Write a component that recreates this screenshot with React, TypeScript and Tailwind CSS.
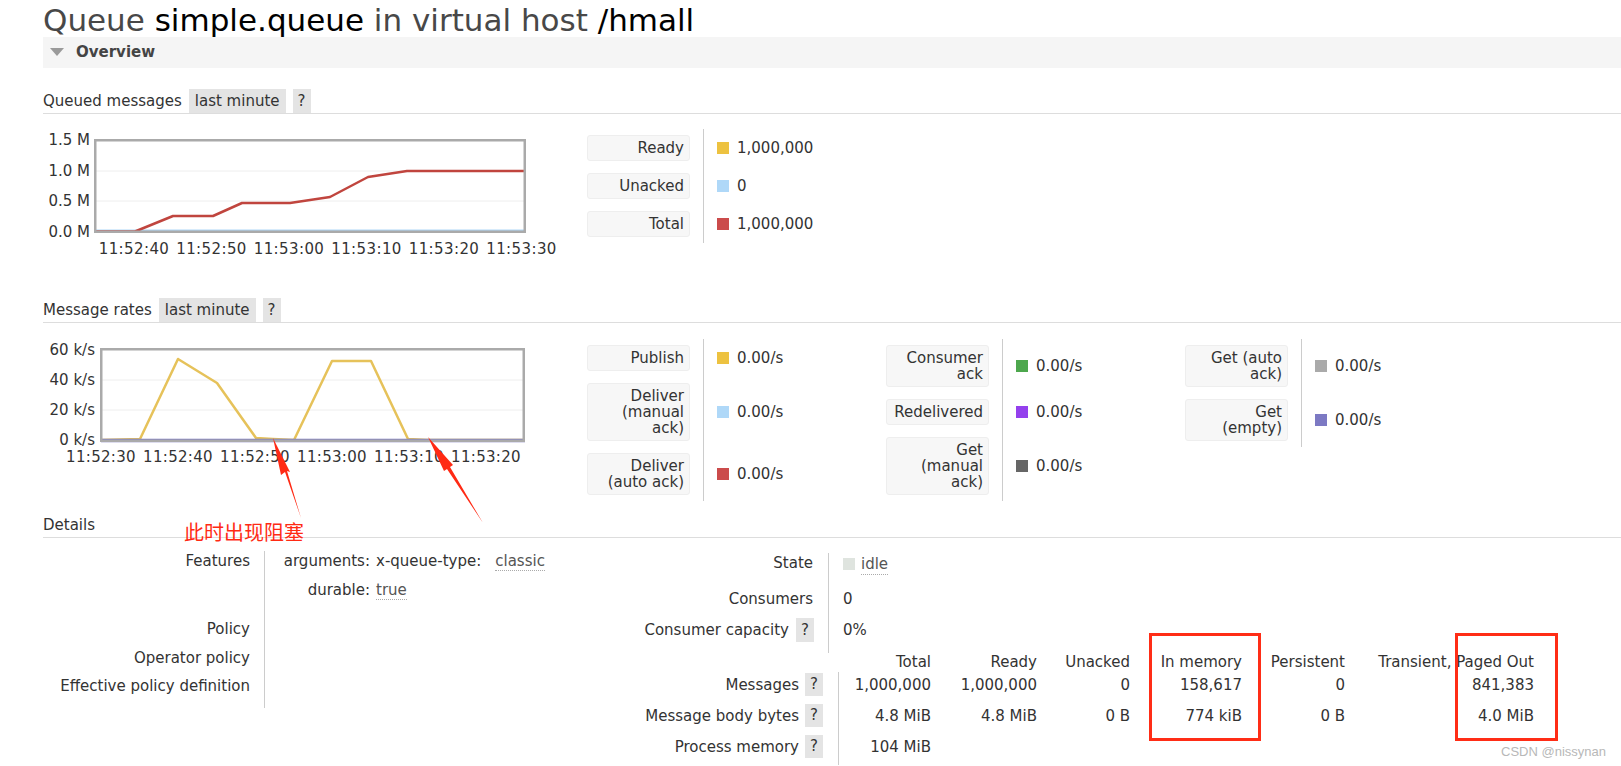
import React from 'react'

type LegendRow = { label: string[]; swatch: string; value: string }

const queuedRows: LegendRow[] = [
  { label: ['Ready'], swatch: 'bg-[#edc240]', value: '1,000,000' },
  { label: ['Unacked'], swatch: 'bg-[#afd8f8]', value: '0' },
  { label: ['Total'], swatch: 'bg-[#cb4b4b]', value: '1,000,000' },
]

const rateCols: LegendRow[][] = [
  [
    { label: ['Publish'], swatch: 'bg-[#edc240]', value: '0.00/s' },
    { label: ['Deliver', '(manual', 'ack)'], swatch: 'bg-[#afd8f8]', value: '0.00/s' },
    { label: ['Deliver', '(auto ack)'], swatch: 'bg-[#cb4b4b]', value: '0.00/s' },
  ],
  [
    { label: ['Consumer', 'ack'], swatch: 'bg-[#4da74d]', value: '0.00/s' },
    { label: ['Redelivered'], swatch: 'bg-[#9440ed]', value: '0.00/s' },
    { label: ['Get', '(manual', 'ack)'], swatch: 'bg-[#666666]', value: '0.00/s' },
  ],
  [
    { label: ['Get (auto', 'ack)'], swatch: 'bg-[#aaaaaa]', value: '0.00/s' },
    { label: ['Get', '(empty)'], swatch: 'bg-[#7c79c3]', value: '0.00/s' },
  ],
]

const SectionHeader = ({ title, range }: { title: string; range?: boolean }) => (
  <div className="flex items-center gap-[7px] h-[25px] border-b border-[#dddddd]">
    <span>{title}</span>
    {range && (
      <>
        <span className="bg-[#e4e4e4] px-[6px] h-[24px] leading-[24px]">last minute</span>
        <span className="bg-[#e4e4e4] px-[5px] h-[24px] leading-[24px]">?</span>
      </>
    )}
  </div>
)

const Legend = ({ rows }: { rows: LegendRow[] }) => (
  <div className="flex flex-col w-[299px] shrink-0">
    {rows.map((r) => (
      <div key={r.label.join(' ')} className="flex">
        <div className="py-[6px] pr-[13px]">
          <div className="w-[103px] bg-[#f7f7f7] border border-[#eeeeee] rounded-[3px] px-[5px] py-[4px] text-right leading-[16px] whitespace-nowrap">
            {r.label.map((l) => (
              <div key={l}>{l}</div>
            ))}
          </div>
        </div>
        <div className="flex items-center border-l border-[#cccccc] pl-[13px]">
          <span className={`w-[12px] h-[12px] mr-[8px] ${r.swatch}`} />
          <span>{r.value}</span>
        </div>
      </div>
    ))}
  </div>
)

const QueuedChart = () => {
  const ys: [string, number][] = [['1.5 M', 26], ['1.0 M', 57], ['0.5 M', 87], ['0.0 M', 118]]
  const xs = ['11:52:40', '11:52:50', '11:53:00', '11:53:10', '11:53:20', '11:53:30']
  return (
    <svg width={530} height={160} className="shrink-0">
      <line x1={52} x2={482} y1={57} y2={57} stroke="#eeeeee" />
      <line x1={52} x2={482} y1={87} y2={87} stroke="#eeeeee" />
      <line x1={52} x2={482} y1={117} y2={117} stroke="#afd8f8" strokeWidth={3} />
      <polyline
        points="52,117.5 92,117.5 130,102 170,102 199,89 247,89 287,83 325,63 364,57 482,57"
        fill="none"
        stroke="#c0453e"
        strokeWidth={2.5}
        strokeLinejoin="round"
      />
      <rect x={52.25} y={26.25} width={429.5} height={91.5} fill="none" stroke="#aaaaaa" strokeWidth={2.5} />
      {ys.map(([t, y]) => (
        <text key={t} x={47} y={y} textAnchor="end" dominantBaseline="central" fontSize={15} fill="#333">
          {t}
        </text>
      ))}
      {xs.map((t, i) => (
        <text
          key={t}
          x={91 + 77.5 * i}
          y={135}
          textAnchor="middle"
          dominantBaseline="central"
          fontSize={15}
          letterSpacing={0.4}
          fill="#333"
        >
          {t}
        </text>
      ))}
    </svg>
  )
}

const RatesChart = () => {
  const ys: [string, number][] = [['60 k/s', 27], ['40 k/s', 57], ['20 k/s', 87], ['0 k/s', 117]]
  const xs = ['11:52:30', '11:52:40', '11:52:50', '11:53:00', '11:53:10', '11:53:20']
  return (
    <svg width={530} height={160} className="shrink-0">
      <line x1={58} x2={482} y1={57} y2={57} stroke="#eeeeee" />
      <line x1={58} x2={482} y1={87} y2={87} stroke="#eeeeee" />
      <polyline
        points="58,117 97,116 135,36 174,60 213,115 230,116 251,117 289,38 328,38 365,116 385,117 482,117"
        fill="none"
        stroke="#e6c25a"
        strokeWidth={2.5}
        strokeLinejoin="round"
      />
      <line x1={58} x2={482} y1={117.5} y2={117.5} stroke="#7b78c0" strokeWidth={3.5} />
      <rect x={58.25} y={26.25} width={422.5} height={91.5} fill="none" stroke="#aaaaaa" strokeWidth={2.5} />
      {ys.map(([t, y]) => (
        <text key={t} x={52} y={y} textAnchor="end" dominantBaseline="central" fontSize={15} fill="#333">
          {t}
        </text>
      ))}
      {xs.map((t, i) => (
        <text
          key={t}
          x={58 + 77 * i}
          y={134}
          textAnchor="middle"
          dominantBaseline="central"
          fontSize={15}
          letterSpacing={0.3}
          fill="#333"
        >
          {t}
        </text>
      ))}
    </svg>
  )
}

const Abbr = ({ children, className = '' }: { children: React.ReactNode; className?: string }) => (
  <span className={`text-[#555] border-b border-dotted border-[#aaaaaa] ${className}`}>{children}</span>
)

const Help = () => (
  <span className="inline-block bg-[#e4e4e4] w-[18px] h-[24px] leading-[24px] text-center">?</span>
)

const DRow = ({ label, h, children }: { label: string; h: string; children?: React.ReactNode }) => (
  <div className={`flex ${h}`}>
    <div className="w-[221px] shrink-0 pr-[14px] text-right">{label}</div>
    <div className="flex-1 border-l border-[#cccccc] pl-[16px]">{children}</div>
  </div>
)

const msgCols = ['w-[92px]', 'w-[106px]', 'w-[93px]', 'w-[112px]', 'w-[103px]', 'w-[189px]']
const msgHead = ['Total', 'Ready', 'Unacked', 'In memory', 'Persistent', 'Transient, Paged Out']
const msgRows: { label: string; vals: string[] }[] = [
  { label: 'Messages', vals: ['1,000,000', '1,000,000', '0', '158,617', '0', '841,383'] },
  { label: 'Message body bytes', vals: ['4.8 MiB', '4.8 MiB', '0 B', '774 kiB', '0 B', '4.0 MiB'] },
  { label: 'Process memory', vals: ['104 MiB'] },
]

export default function App() {
  return (
    <div className="relative w-[1621px] h-[766px] overflow-hidden bg-white text-[15px] text-[#333] font-['DejaVu_Sans',Verdana,sans-serif]">
      <div className="pl-[43px]">
        <h1 className="h-[37px] pt-[3px] text-[31px] leading-[34px] text-[#484848] whitespace-nowrap">
          Queue <span className="text-black">simple.queue</span> in virtual host <span className="text-black">/hmall</span>
        </h1>

        <div className="flex items-center h-[31px] bg-[#f5f5f5]">
          <svg width={14} height={9} className="ml-[7px]">
            <polygon points="0,0 14,0 7,8" fill="#9a9a9a" />
          </svg>
          <span className="ml-[12px] font-bold text-[#444]">Overview</span>
        </div>

        <div className="mt-[21px]">
          <SectionHeader title="Queued messages" range />
        </div>
        <div className="flex h-[184px]">
          <QueuedChart />
          <div className="ml-[14px] mt-[15px]">
            <Legend rows={queuedRows} />
          </div>
        </div>

        <SectionHeader title="Message rates" range />
        <div className="flex h-[190px]">
          <RatesChart />
          <div className="ml-[14px] mt-[16px] flex items-start">
            {rateCols.map((c, i) => (
              <Legend key={i} rows={c} />
            ))}
          </div>
        </div>

        <SectionHeader title="Details" />
        <div className="flex leading-[20px]">
          <div className="w-[557px] shrink-0 mt-[13px]">
            <DRow label="Features" h="h-[68px]">
              <div className="grid grid-cols-[89px_auto] gap-x-[6px] gap-y-[9px] justify-start">
                <span className="text-right">arguments:</span>
                <span className="whitespace-nowrap">
                  x-queue-type:<Abbr className="ml-[14px]">classic</Abbr>
                </span>
                <span className="text-right">durable:</span>
                <span>
                  <Abbr>true</Abbr>
                </span>
              </div>
            </DRow>
            <DRow label="Policy" h="h-[29px]" />
            <DRow label="Operator policy" h="h-[28px]" />
            <DRow label="Effective policy definition" h="h-[32px]" />
          </div>

          <div className="mt-[15px]">
            <div className="flex h-[36px]">
              <div className="w-[228px] pr-[15px] text-right">State</div>
              <div className="flex items-start border-l border-[#cccccc] pl-[14px]">
                <span className="flex items-center h-[22px] gap-[6px]">
                  <span className="w-[12px] h-[12px] bg-[#dfe4df]" />
                  <Abbr className="text-[#333]">idle</Abbr>
                </span>
              </div>
            </div>
            <div className="flex h-[29px]">
              <div className="w-[228px] pr-[15px] text-right">Consumers</div>
              <div className="border-l border-[#cccccc] pl-[14px]">0</div>
            </div>
            <div className="flex h-[35px] leading-[24px]">
              <div className="w-[228px] pr-[14px] flex justify-end items-start gap-[7px]">
                <span>Consumer capacity</span>
                <Help />
              </div>
              <div className="border-l border-[#cccccc] pl-[14px]">0%</div>
            </div>

            <div className="flex h-[19px] leading-[19px]">
              <div className="w-[239px] shrink-0" />
              {msgHead.map((t, i) => (
                <div key={t} className={`${msgCols[i]} text-right whitespace-nowrap`}>
                  {t}
                </div>
              ))}
            </div>
            {msgRows.map((r) => (
              <div key={r.label} className="flex h-[31px] leading-[23px]">
                <div className="w-[238px] shrink-0 pr-[15px] pt-[1px] flex justify-end items-start gap-[6px]">
                  <span className="pt-[1px]">{r.label}</span>
                  <span className="inline-block bg-[#e4e4e4] w-[18px] h-[23px] text-center">?</span>
                </div>
                <div className="flex border-l border-[#cccccc] pt-[2px]">
                  {r.vals.map((v, i) => (
                    <div key={i} className={`${msgCols[i]} text-right whitespace-nowrap`}>
                      {v}
                    </div>
                  ))}
                </div>
              </div>
            ))}
          </div>
        </div>
      </div>

      {/* annotations drawn over the page */}
      <svg className="absolute inset-0 pointer-events-none" width={1621} height={766}>
        <polygon points="273,438 281,475 285,472 301,518 287,471 290,472" fill="#ff2a14" />
        <polygon points="428,437 444,471 447,469 483,523 450,467 453,465" fill="#ff2a14" />
        <rect x={1150.5} y={634.5} width={109} height={105} fill="none" stroke="#ff2d16" strokeWidth={3} />
        <rect x={1456.5} y={634.5} width={100} height={105} fill="none" stroke="#ff2d16" strokeWidth={3} />
      </svg>
      <div className="absolute left-[184px] top-[518px] text-[20px] leading-[28px] text-[#ff2a14] font-['Noto_Sans_CJK_SC',sans-serif]">
        此时出现阻塞
      </div>
      <div className="absolute right-[15px] top-[742px] text-[13px] text-[#b8b8b8] font-['Liberation_Sans',Arial,sans-serif]">
        CSDN @nissynan
      </div>
    </div>
  )
}
